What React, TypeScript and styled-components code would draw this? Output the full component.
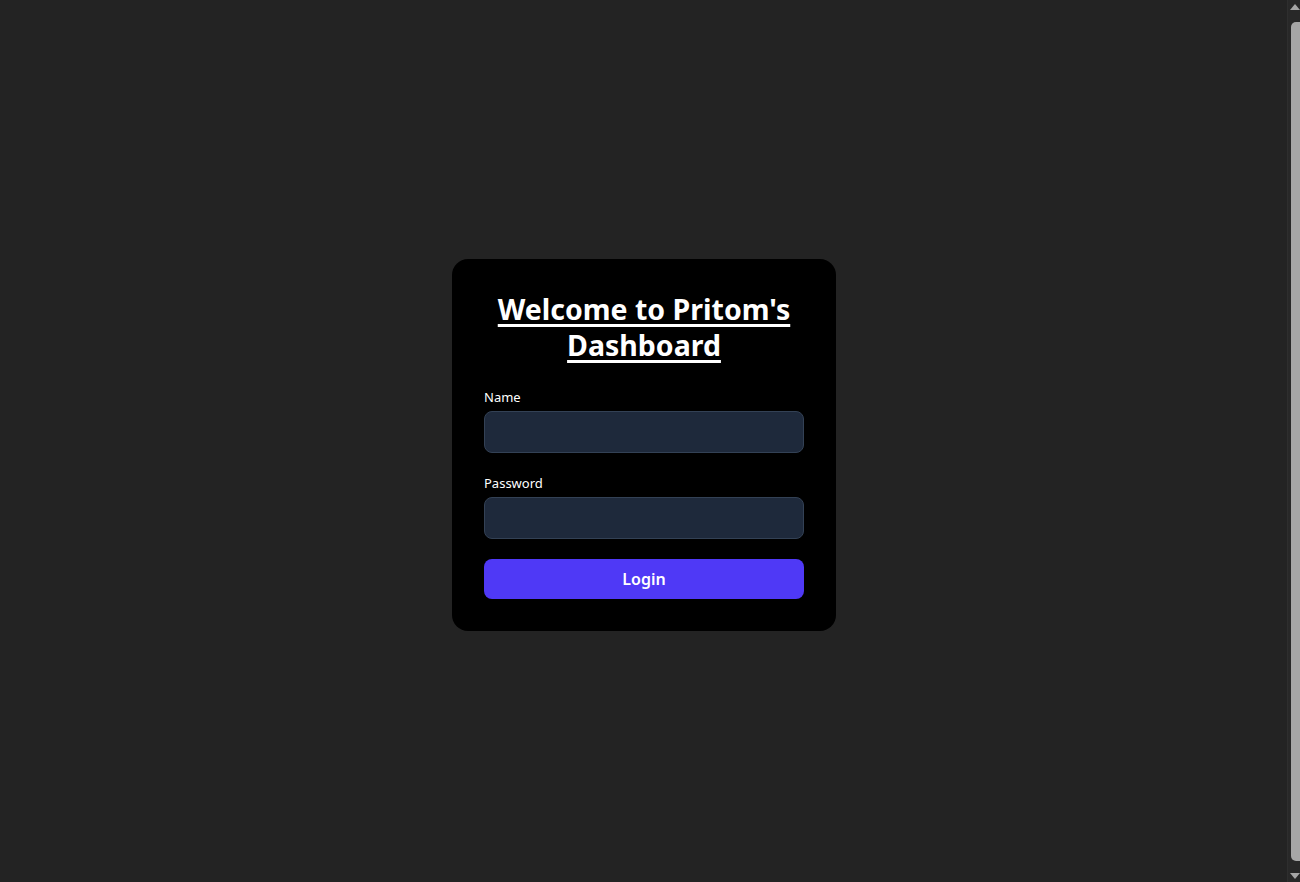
import React from "react";
import styled, { createGlobalStyle } from "styled-components";

const GlobalStyle = createGlobalStyle`
  html, body {
    margin: 0;
    background: #232323;
    font-family: "Noto Sans", "Open Sans", sans-serif;
    color: #ffffff;
  }
  * { box-sizing: border-box; }
`;

const Page = styled.main`
  min-height: calc(100vh + 8px);
  display: flex;
  align-items: center;
  justify-content: center;
  padding-right: 12px;
`;

const Card = styled.div`
  width: 384px;
  background: #000000;
  border-radius: 16px;
  padding: 32px;
  display: flex;
  flex-direction: column;
`;

const Title = styled.h1`
  margin: 0 0 24px;
  font-size: 28.5px;
  line-height: 36px;
  font-weight: 700;
  text-align: center;
  text-decoration: underline;
  text-decoration-thickness: 3px;
  text-underline-offset: 4px;
  color: #ffffff;
`;

const Form = styled.form`
  display: flex;
  flex-direction: column;
  gap: 20px;
`;

const Field = styled.div`
  display: flex;
  flex-direction: column;
  gap: 4px;
`;

const Label = styled.label`
  font-size: 13px;
  line-height: 20px;
  color: #ffffff;
`;

const Input = styled.input`
  height: 42px;
  width: 100%;
  background: #1e293b;
  border: 1px solid #334155;
  border-radius: 8px;
  padding: 8px 12px;
  color: #ffffff;
  font-size: 16px;
  font-family: inherit;
  outline: none;
`;

const Button = styled.button`
  height: 40px;
  width: 100%;
  background: #4f39f6;
  border: none;
  border-radius: 8px;
  color: #ffffff;
  font-family: inherit;
  font-size: 16px;
  font-weight: 600;
  cursor: pointer;
`;

/* decorative browser scrollbar drawn over the page edge */
const ScrollTrack = styled.div`
  position: fixed;
  top: 0;
  right: 0;
  bottom: 0;
  width: 13px;
  background: #282828;
  border-left: 1px solid #2e2e2e;
  display: flex;
  flex-direction: column;
  align-items: flex-end;
  padding: 4px 0 3px;
  gap: 12px;
`;

const Arrow = styled.div<{ $down?: boolean }>`
  width: 0;
  height: 0;
  border-left: 5px solid transparent;
  border-right: 5px solid transparent;
  ${(p) =>
    p.$down
      ? "border-top: 6px solid #a6a6a6;"
      : "border-bottom: 6px solid #a6a6a6;"}
`;

const Thumb = styled.div`
  flex: 1;
  width: 9px;
  background: #a6a6a6;
  border-radius: 5px 0 0 5px;
`;

export default function App() {
  return (
    <>
      <GlobalStyle />
      <Page>
        <Card>
          <Title>Welcome to Pritom's Dashboard</Title>
          <Form onSubmit={(e) => e.preventDefault()}>
            <Field>
              <Label htmlFor="name">Name</Label>
              <Input id="name" type="text" />
            </Field>
            <Field>
              <Label htmlFor="password">Password</Label>
              <Input id="password" type="password" />
            </Field>
            <Button type="submit">Login</Button>
          </Form>
        </Card>
      </Page>
      <ScrollTrack aria-hidden="true">
        <Arrow />
        <Thumb />
        <Arrow $down />
      </ScrollTrack>
    </>
  );
}
